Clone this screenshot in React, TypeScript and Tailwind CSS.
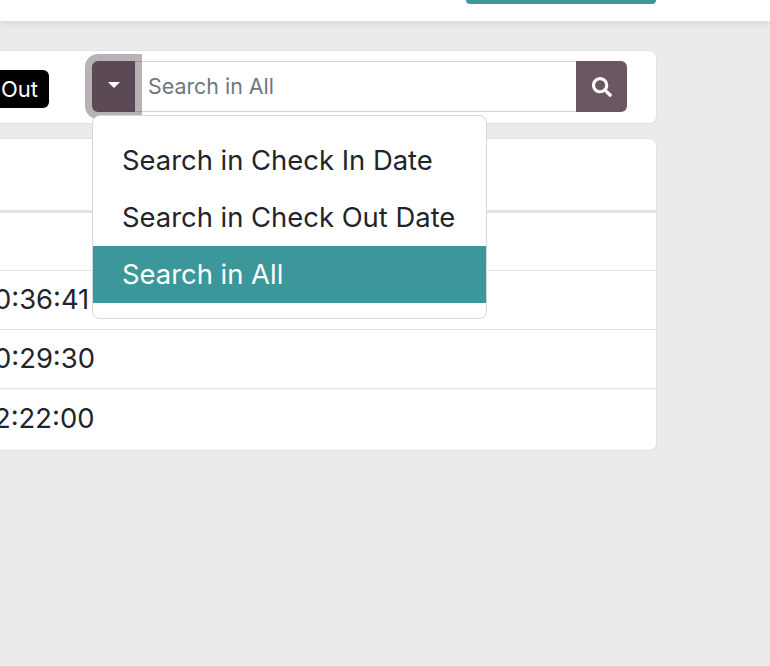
import { FaSearch } from "react-icons/fa";

const font = "font-['Inter','Noto_Sans',sans-serif]";

const rows = ["0:36:41", "0:29:30", "2:22:00"];

function SearchBar() {
  return (
    <div className="relative flex h-[51px] w-[535px]">
      {/* focus ring sits over the input */}
      <button className="relative z-[1] flex h-[51px] w-[43px] items-center justify-center rounded-l-[6px] bg-[#5b4a55] shadow-[0_0_0_7px_rgba(82,59,72,0.4)]">
        <span className="mb-[3px] h-0 w-0 border-x-[6px] border-t-[6px] border-x-transparent border-t-white" />
      </button>
      <div className="flex flex-1 items-center border-y border-[#d3d3d8] bg-white pl-[13px] text-[21.4px] text-[#6f7780]">
        Search in All
      </div>
      <button className="flex h-[51px] w-[51px] items-center justify-center rounded-r-[6px] bg-[#6a5762] text-white">
        <FaSearch size={20} />
      </button>

      <div className="absolute left-0 top-[54px] z-10 h-[204px] w-[395px] rounded-[8px] border border-[#d8d8dc] bg-white pt-[16px] text-[27.4px] text-[#21252b]">
        <div className="flex h-[57px] items-center pl-[29px]">Search in Check In Date</div>
        <div className="flex h-[57px] items-center pl-[29px]">Search in Check Out Date</div>
        <div className="flex h-[57px] items-center bg-[#3c979b] pl-[29px] text-white">Search in All</div>
      </div>
    </div>
  );
}

export default function App() {
  return (
    <div className={`${font} h-[666px] w-[770px] overflow-hidden bg-[#ebebeb]`}>
      <header className="flex h-[21px] justify-end bg-white pr-[114px] shadow-[0_2px_8px_rgba(0,0,0,0.1)]">
        <div className="h-[4px] w-[190px] rounded-b-[5px] bg-[#3c979b]" />
      </header>

      <main className="ml-[-40px] mr-[113px] pt-[29px]">
        <div className="flex h-[74px] items-start rounded-[8px] border border-[#e1e1e8] bg-white pl-[10px] pt-[10px]">
          <span className="mt-[9px] flex h-[38px] w-[78px] items-center justify-end rounded-[6px] bg-black pr-[11px] text-[22px] text-white">
            Out
          </span>
          <div className="ml-[43px]">
            <SearchBar />
          </div>
        </div>

        <div className="mt-[14px] h-[313px] rounded-[8px] border border-[#e1e1e8] border-b-[#dfe1e6] bg-white text-[27.4px] text-[#21252b]">
          <div className="h-[74px] border-b-[3px] border-[#e1e1e8]" />
          <div className="h-[58px] border-b border-[#e3e3e8]" />
          {rows.map((t, i) => (
            <div
              key={t}
              className={`flex h-[59px] items-center pl-[33px] ${i < 2 ? "border-b border-[#e1e1e6]" : ""}`}
            >
              {t}
            </div>
          ))}
        </div>
      </main>
    </div>
  );
}
